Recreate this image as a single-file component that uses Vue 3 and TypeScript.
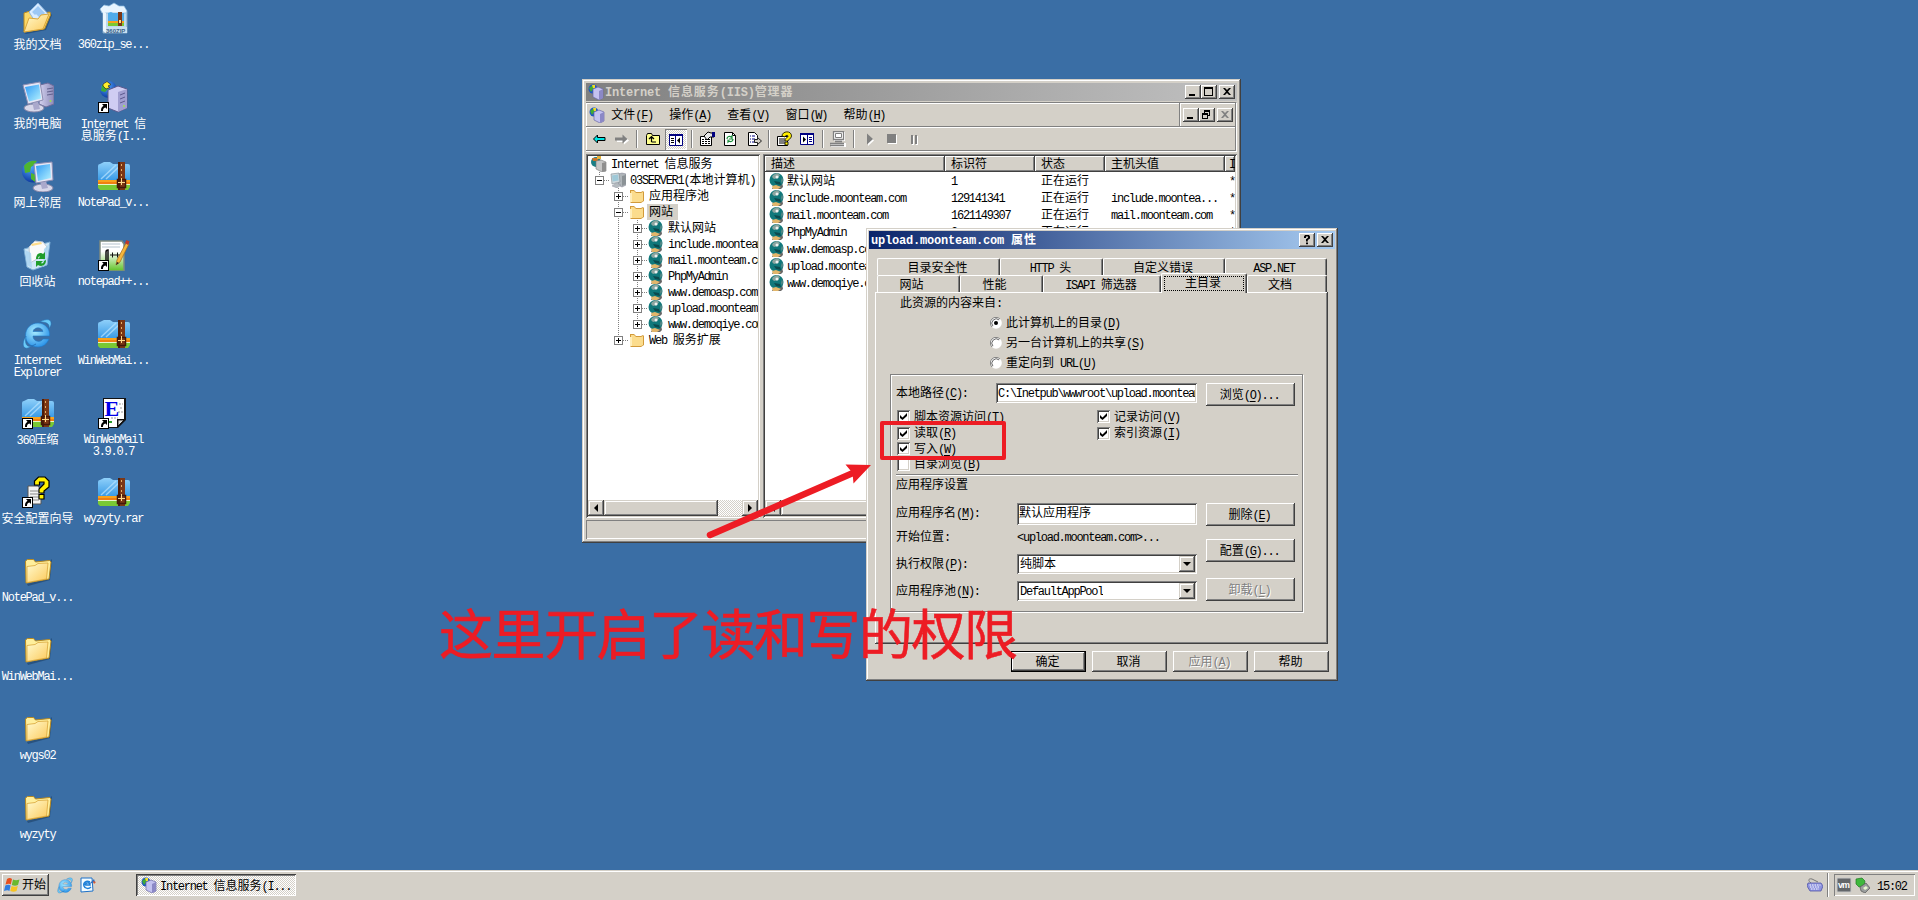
<script setup lang="ts">
import { h, type FunctionalComponent } from 'vue'

/* Splits a label into half-width and full-width runs; "&" marks the accelerator letter. */
const Tx: FunctionalComponent<{ t: string }> = (props) => {
  const runs = props.t.match(/&[\x21-\x7e]|[\x20-\x25\x27-\x7e]+|[^\x20-\x7e]+/g) ?? []
  return h(
    'span',
    { class: 'tx' },
    runs.map((r) => {
      if (r[0] === '&') return h('span', { class: 'en key' }, r.slice(1))
      return h('span', { class: /^[\x20-\x7e]/.test(r) ? 'en' : 'zh' }, r)
    }),
  )
}
Tx.props = ['t']

const Ico: FunctionalComponent<{ n: string; w?: number; hh?: number }> = (props) =>
  h('svg', { class: 'ico', width: props.w ?? 16, height: props.hh ?? props.w ?? 16 }, [
    h('use', { href: '#' + props.n }),
  ])
Ico.props = ['n', 'w', 'hh']

interface DeskItem { icon: string; lines: string[]; link?: boolean }
const columns: DeskItem[][] = [
  [
    { icon: 'd-docs', lines: ['我的文档'] },
    { icon: 'd-pc', lines: ['我的电脑'] },
    { icon: 'd-net', lines: ['网上邻居'] },
    { icon: 'd-bin', lines: ['回收站'] },
    { icon: 'd-ie', lines: ['Internet', 'Explorer'] },
    { icon: 'd-zip', lines: ['360压缩'], link: true },
    { icon: 'd-sec', lines: ['安全配置向导'], link: true },
    { icon: 'd-folder', lines: ['NotePad_v...'] },
    { icon: 'd-folder', lines: ['WinWebMai...'] },
    { icon: 'd-folder', lines: ['wygs02'] },
    { icon: 'd-folder', lines: ['wyzyty'] },
  ],
  [
    { icon: 'd-setup', lines: ['360zip_se...'] },
    { icon: 'd-iis', lines: ['Internet 信', '息服务(I...'], link: true },
    { icon: 'd-zip', lines: ['NotePad_v...'] },
    { icon: 'd-npp', lines: ['notepad++...'], link: true },
    { icon: 'd-zip', lines: ['WinWebMai...'] },
    { icon: 'd-mail', lines: ['WinWebMail', '3.9.0.7'], link: true },
    { icon: 'd-zip', lines: ['wyzyty.rar'] },
  ],
]

const menus = ['文件(&F)', '操作(&A)', '查看(&V)', '窗口(&W)', '帮助(&H)']

type Cell = 'line' | 'plus' | 'minus' | 'plusEnd' | 'minusEnd' | 'blank'
interface Node { cells: Cell[]; icon: string; text: string; sel?: boolean }
const tree: Node[] = [
  { cells: [], icon: 's-root', text: 'Internet 信息服务' },
  { cells: ['minusEnd'], icon: 's-server', text: '03SERVER1(本地计算机)' },
  { cells: ['blank', 'plus'], icon: 's-folder', text: '应用程序池' },
  { cells: ['blank', 'minus'], icon: 's-folder', text: '网站', sel: true },
  { cells: ['blank', 'line', 'plus'], icon: 's-site', text: '默认网站' },
  { cells: ['blank', 'line', 'plus'], icon: 's-site', text: 'include.moonteam.com' },
  { cells: ['blank', 'line', 'plus'], icon: 's-site', text: 'mail.moonteam.com' },
  { cells: ['blank', 'line', 'plus'], icon: 's-site', text: 'PhpMyAdmin' },
  { cells: ['blank', 'line', 'plus'], icon: 's-site', text: 'www.demoasp.com' },
  { cells: ['blank', 'line', 'plus'], icon: 's-site', text: 'upload.moonteam.com' },
  { cells: ['blank', 'line', 'plusEnd'], icon: 's-site', text: 'www.demoqiye.com' },
  { cells: ['blank', 'plusEnd'], icon: 's-folder', text: 'Web 服务扩展' },
]

const heads = ['描述', '标识符', '状态', '主机头值', 'IP']
const sites = [
  ['默认网站', '1', '正在运行', '', '*'],
  ['include.moonteam.com', '129141341', '正在运行', 'include.moontea...', '*'],
  ['mail.moonteam.com', '1621149307', '正在运行', 'mail.moonteam.com', '*'],
  ['PhpMyAdmin', '2', '正在运行', '', '*'],
  ['www.demoasp.com', '', '', '', ''],
  ['upload.moonteam.com', '', '', '', ''],
  ['www.demoqiye.com', '', '', '', ''],
]

const tabsBack = [
  { t: '目录安全性', c: 't1' }, { t: 'HTTP 头', c: 't2' }, { t: '自定义错误', c: 't3' }, { t: 'ASP.NET', c: 't4' },
]
const tabsFront = [
  { t: '网站', c: 'f1' }, { t: '性能', c: 'f2' }, { t: 'ISAPI 筛选器', c: 'f3' }, { t: '主目录', c: 'f4 on' }, { t: '文档', c: 'f5' },
]
const sources = [
  { t: '此计算机上的目录(&D)', on: true },
  { t: '另一台计算机上的共享(&S)', on: false },
  { t: '重定向到 URL(&U)', on: false },
]
const permsLeft = [
  { t: '脚本资源访问(&T)', on: true }, { t: '读取(&R)', on: true }, { t: '写入(&W)', on: true }, { t: '目录浏览(&B)', on: false },
]
const permsRight = [{ t: '记录访问(&V)', on: true }, { t: '索引资源(&I)', on: true }]
</script>

<template>
  <div class="screen">
    <svg class="defs" width="0" height="0">
      <defs>
        <linearGradient id="gFold" x1="0" y1="0" x2="1" y2="1"><stop offset="0" stop-color="#fffbd0" /><stop offset="1" stop-color="#fcc95a" /></linearGradient>
        <linearGradient id="gZip" x1="0" y1="0" x2="0" y2="1"><stop offset="0" stop-color="#8fd0fa" /><stop offset="1" stop-color="#3a9be6" /></linearGradient>
        <linearGradient id="gScr" x1="0" y1="0" x2="1" y2="1"><stop offset="0" stop-color="#2f9af5" /><stop offset="1" stop-color="#b5f3ff" /></linearGradient>
        <linearGradient id="gBox" x1="0" y1="0" x2="1" y2="0"><stop offset="0" stop-color="#d5d3f0" /><stop offset="1" stop-color="#8c8ab8" /></linearGradient>
        <radialGradient id="gE" cx=".4" cy=".35" r=".7"><stop offset="0" stop-color="#a8ecff" /><stop offset="1" stop-color="#2790e8" /></radialGradient>
        <radialGradient id="gGlobe" cx=".4" cy=".3" r=".75"><stop offset="0" stop-color="#4fa8ff" /><stop offset="1" stop-color="#0a329a" /></radialGradient>
        <linearGradient id="gGreen" x1="0" y1="0" x2="0" y2="1"><stop offset=".35" stop-color="#fff" /><stop offset="1" stop-color="#5fc226" /></linearGradient>
      </defs>

      <symbol id="d-folder" viewBox="1 -1 32 32">
        <path d="M6 28l22-6 2-19 1 1-2 20-22 6z" fill="#1d3f66" opacity=".6" />
        <path d="M4.500 5l2-1.500 6 0 2 2.500 14-1.500 1.500 1.500-2 17L5 27z" fill="#ffef9c" stroke="#b98a20" />
        <path d="M6 10.500l8-1 3-2 10-.5-1.500 16L6 26.500z" fill="url(#gFold)" stroke="#d9a63a" stroke-width=".8" />
      </symbol>
      <symbol id="d-docs" viewBox="1 0 32 32">
        <path d="M3 31l20-4 7-15 1 1-6 15-20 4z" fill="#1d3f66" opacity=".6" />
        <path d="M3 11l6-2 3 2h10l7-1 .5 3-6 14L3 30z" fill="#fbd867" stroke="#b98a20" />
        <path d="M8 10l9-9 11 12-11 11z" fill="#d9ecff" stroke="#8fb6e0" />
        <path d="M11 10l6-6 3 3-6 6zM20 7l4 4-5 5-4-4z" fill="#9cc8f5" />
        <path d="M3 30l5-14 9 1 3-4 8-1-6 15z" fill="url(#gFold)" stroke="#d9a63a" />
      </symbol>
      <symbol id="d-pc" viewBox="0 0 32 32">
        <path d="M18 4l8-2 6 3v18l-8 3-7-3z" fill="url(#gBox)" stroke="#6f6d9c" />
        <path d="M25 8l6-1M25 11l6-1M25 14l6-1" stroke="#62608c" />
        <circle cx="28.500" cy="20" r="1" fill="#9de34c" />
        <ellipse cx="12" cy="27" rx="10" ry="4" fill="#d8d8ea" stroke="#8888a8" />
        <path d="M10 20h6l2 8-6 1z" fill="#aaa9cc" />
        <path d="M1 4l17-3 3 18-15 4z" fill="#e5e6f5" stroke="#8e8eb2" />
        <path d="M3 6l14-2.500 2 14-12 3z" fill="url(#gScr)" />
      </symbol>
      <symbol id="d-net" viewBox="0 0 32 32">
        <circle cx="11" cy="11.500" r="11" fill="url(#gGlobe)" />
        <path d="M2 6c3-5 9-6 13-5l-3 4-3 2-1 5-5 1zM9 13l5 2-1 7-4-3z" fill="#4fb52f" />
        <ellipse cx="21" cy="28" rx="10" ry="4" fill="#d8d8ea" stroke="#8888a8" />
        <path d="M18 21h6l2 7-6 1z" fill="#aaa9cc" />
        <path d="M12 4l18-2 1 18-17 3z" fill="#e5e6f5" stroke="#8e8eb2" />
        <path d="M14 6l14-2 1 14-13 3z" fill="url(#gScr)" />
      </symbol>
      <symbol id="d-bin" viewBox="0 0 32 32">
        <path d="M2 10l26-7-3 23-14 5-6-3z" fill="#cfe7f7" stroke="#7fb0d6" />
        <path d="M7 8l6-6 8 1 4 5-3 8-14 8z" fill="#fafafa" stroke="#bfc9d4" />
        <path d="M9 5l10-2 1 2-10 2z" fill="#ffdc8a" />
        <path d="M3 11l6 3 1 15-5-3zM22 10l5-5-3 21-3 2z" fill="#a7d3f0" opacity=".8" />
        <path d="M14 20c0-6 5-7 7-5l2-2v7h-7l2-2c-1-1-2 0-2 2zM24 21c0 6-5 7-8 5l-2 2v-6h7l-2 2c1 1 3 0 3-2z" fill="#1f9c2b" />
      </symbol>
      <symbol id="d-ie" viewBox="0 0 32 32">
        <path d="M27.500 18H11c0 6 8 7 10 3h6c-2 5-6 8-11 8C8 29 3.500 24 3.500 17.500 3.500 10 9 5 16 5s12.500 6 11.500 13zM11 13.500h10c-1-5-9-5-10 0z" fill="url(#gE)" fill-rule="evenodd" stroke="#1e78c8" stroke-width=".6" />
        <path d="M18 4c7-4 12-3 11 3l-2 4c1-6-3-7-9-7zM4 18C-1 26 1 33 8 29l6-3c-8 5-12 2-10-8z" fill="#6bcbf8" stroke="#1e68b0" stroke-width=".5" />
      </symbol>
      <symbol id="d-zip" viewBox="0 0 32 32">
        <path d="M0 6q0-2 2-2l4-2h6l3 2h15q2 0 2 2v14H0z" fill="url(#gZip)" />
        <path d="M3 19L18 5M8 19L23 5" stroke="#b9e4ff" stroke-width="1.500" opacity=".7" />
        <path d="M0 20h32v4H0z" fill="#f9a21b" /><path d="M0 22h32v2H0z" fill="#f07f12" />
        <path d="M0 24h32v3l-2 3H2l-2-2z" fill="#79c934" /><path d="M0 24h32v1H0z" fill="#e8f5c8" />
        <path d="M20 2h7v28h-7z" fill="#7c3715" /><path d="M20 2h2v28h-2z" fill="#4e1d08" />
        <path d="M23 4h1v2h-1zM23 9h1v2h-1zM23 14h1v2h-1z" fill="#e4b068" />
        <path d="M19.500 19.500h8v8h-8z" fill="none" stroke="#42180a" stroke-width="1.500" /><path d="M23 18h1v7h-1zM20 22h7v1h-7z" fill="#ffd98a" />
      </symbol>
      <symbol id="d-setup" viewBox="0 0 32 32">
        <path d="M5 8h23l1 2v21H5z" fill="#bcd8ee" stroke="#7fa4c4" />
        <path d="M2 7l4-4 5 1 5-3 5 3 5 0 3 5-1 2H4z" fill="#e9f5ff" stroke="#88b7dd" stroke-width=".7" />
        <path d="M10 11l3-1 2 1h11v13H10z" fill="#4fabea" /><path d="M10 19h16v2H10z" fill="#f9a21b" /><path d="M10 21h16v3H10z" fill="#79c934" />
        <path d="M20 10h4v14h-4z" fill="#7c3715" /><path d="M21 18h2v3h-2z" fill="#ffd98a" />
        <path d="M5 9l3 2v20l-3-2z" fill="#eaf5fd" /><path d="M8 25h21v6H8z" fill="#c9dff0" />
        <text x="8" y="30.500" font-family="Liberation Sans" font-size="6" font-weight="700" fill="#3a5f85">360ZIP</text>
      </symbol>
      <symbol id="d-iis" viewBox="0 0 32 32">
        <circle cx="10.500" cy="8.500" r="8.500" fill="url(#gGlobe)" />
        <path d="M4 4l5-1 2 4-4 4-4-1zM9 12l4 2-2 4z" fill="#3faa35" />
        <path d="M5 3l4-2.500 4 3-3 1.500 2 1.500-4 1.500-3-3z" fill="#ffee2c" stroke="#333" stroke-width=".8" />
        <path d="M10 9l10-4 9 3v19l-9 4-10-4z" fill="#cfcdf2" stroke="#5d5a8e" />
        <path d="M20 11l9-3v19l-9 4z" fill="#a19fd0" /><path d="M22 14l5-2M22 18l5-2M22 22l5-2" stroke="#5d5a8e" />
        <circle cx="26" cy="25" r="1" fill="#9de34c" />
      </symbol>
      <symbol id="d-npp" viewBox="0 0 32 32">
        <path d="M2 2h22l2 3v27H2z" fill="url(#gGreen)" stroke="#7f8a80" stroke-width="1.500" />
        <path d="M4 5h18M4 8h18" stroke="#b4c2cd" />
        <path d="M8 22v-9q0-2 2-2v11" fill="none" stroke="#111" stroke-width="1.500" />
        <path d="M12 16h5M14.500 13.500v5M17 16h5M19.500 13.500v5" stroke="#111" />
        <path d="M18 26l1-5L28 4l3 1-9 18z" fill="#f5b63c" stroke="#a1651b" stroke-width=".7" /><path d="M27 4l1.500-3 3 1.500L30 6z" fill="#c0392b" />
        <path d="M18 26l1-3 2 1z" fill="#222" />
      </symbol>
      <symbol id="d-mail" viewBox="0 0 32 32">
        <path d="M5 1h23v22l-8 8H5z" fill="#111" /><path d="M6 2h20v20h-7v8H6z" fill="#fff" />
        <path d="M20 29v-6h6z" fill="#ddd" stroke="#000" stroke-width=".8" />
        <path d="M21 7h4M22 11h3M20 15h5M13 21h7" stroke="#999" stroke-dasharray="2 1" />
        <text x="6.500" y="19" font-family="Liberation Serif" font-size="22" font-weight="700" fill="#0000e8">E</text>
        <path d="M10 24h4v2h-4z" fill="#2a9a2a" />
      </symbol>
      <symbol id="d-sec" viewBox="0 0 32 32">
        <path d="M6 10h10l3 4v14H6z" fill="#f2f2f2" stroke="#555" /><path d="M8 15h9M8 18h9M8 21h9M8 24h9" stroke="#888" />
        <path d="M12.500 9V5l4-4h6.500l4 4v6l-5 4v2h-5v-4l5-5V6h-4.500v3zM17 18.500h5V23h-5z" fill="#fff200" stroke="#000" stroke-width="1.200" />
      </symbol>
      <symbol id="link" viewBox="0 0 11 11">
        <path d="M0 0h11v11H0z" fill="#000" /><path d="M1 1h9v9H1z" fill="#fff" /><path d="M4 2h5v5L7.500 5.500C5 6 5 7.500 5 9H3C3 7 3 5.500 5.500 3.700z" fill="#000" />
      </symbol>

      <symbol id="s-iis" viewBox="0 0 16 16">
        <circle cx="5" cy="5" r="4.500" fill="#1d56c4" /><path d="M1 4l4-3 1 3-3 4z" fill="#3faa35" /><path d="M4 1l3 0 0 3-2 0z" fill="#f3dc26" />
        <path d="M5 5l5-2 5 2v9l-4 2-6-3z" fill="#c3c2f0" stroke="#6a68a6" stroke-width=".7" /><path d="M11 7l4-2v9l-4 2z" fill="#8b88c6" />
      </symbol>
      <symbol id="s-root" viewBox="0 0 16 16">
        <circle cx="5" cy="6" r="5" fill="#1b7f86" /><path d="M1 2h6v3H2z" fill="#c8742a" /><path d="M6 0h4v3H6z" fill="#e6b23a" />
        <path d="M5 5l5-1 5 2v9l-4 1-6-3z" fill="#c6c6c6" stroke="#777" stroke-width=".6" /><path d="M11 7l4-1v9l-4 1z" fill="#8f8f8f" />
      </symbol>
      <symbol id="s-server" viewBox="0 0 16 16">
        <path d="M8 2l4-1 4 1v11l-4 2-4-2z" fill="#b0b6ba" stroke="#778" stroke-width=".5" /><path d="M12 4l4-1v9l-4 2z" fill="#8b9296" />
        <path d="M1 2l8-1 1 9-8 2z" fill="#cfd8dc" stroke="#7d8a90" stroke-width=".6" /><path d="M2 3.500l6-1 .7 6-6 1z" fill="#9fc9d8" /><path d="M2 14l4-3 5 2-4 3z" fill="#b5bcc0" stroke="#889" stroke-width=".4" />
      </symbol>
      <symbol id="s-folder" viewBox="0 0 16 16">
        <path d="M1 2h4l2 2h5l2-1 1 1v9l-3 2H2l-1-1z" fill="#d29a3a" /><path d="M2 3h3l2 2h5l2-1v9l-2 1H2z" fill="#fbdc8d" /><path d="M1 5l2 0v9H1z" fill="#ffeebc" />
      </symbol>
      <symbol id="s-site" viewBox="0 0 16 16">
        <path d="M5 12l8-3 1 5-2 2H3z" fill="#666" /><circle cx="7.500" cy="7" r="7" fill="#10787b" />
        <path d="M4 2l4-2 3 2-2 3-4 1-2-2z" fill="#8ba5a0" /><path d="M5 8l6 1 1 3-5-1z" fill="#0b4a4e" /><circle cx="8" cy="4" r="1.500" fill="#eef2f2" />
        <path d="M13 4l1 3-1 4-1-3z" fill="#5e8886" /><path d="M3 13l4-1 5 2-3 2H4z" fill="#e2b66b" />
      </symbol>

      <symbol id="b-back" viewBox="0 0 16 16"><path d="M2.500 8L6.500 4v2.500H14v3H6.500V12z" fill="#00e5e5" stroke="#000" /></symbol>
      <symbol id="b-fwd" viewBox="0 0 16 16"><path d="M3 8h7V5l5 4.500-5 4V11H3z" fill="#fff" /><path d="M1 6.500h7.500V3.500L13.500 8l-5 4.500V9.500H1z" fill="#808080" /></symbol>
      <symbol id="b-up" viewBox="0 0 16 16"><path d="M1.500 13.500v-9l1-2h4l1 2h7v9z" fill="#ffff8c" stroke="#000" /><path d="M6.500 11V6M4 8l2.500-2.500L9 8M6.500 11H11" fill="none" stroke="#000" stroke-width="1.200" /></symbol>
      <symbol id="b-tree" viewBox="0 0 16 16"><path d="M1.500 2.500h13v11h-13z" fill="#fff" stroke="#000080" /><path d="M1 2h14v2H1zM7 4h1v10H7z" fill="#000080" /><path d="M3 6.500h3M3 8.500h3M3 10.500h3" stroke="#000" /><path d="M12 5.500v6l-3-3z" fill="#000" /></symbol>
      <symbol id="b-props" viewBox="0 0 16 16"><path d="M1.500 5.500h11v9h-11z" fill="#fff" stroke="#000" /><path d="M3 8.500h8M3 10.500h8M3 12.500h8" stroke="#000" stroke-dasharray="2 1" /><path d="M5 5l4-4 3 1 3 0v4h-4L8 9z" fill="#e8e8e8" stroke="#000" /><path d="M13 1h3v5h-3z" fill="#000080" /></symbol>
      <symbol id="b-refresh" viewBox="0 0 16 16"><path d="M2.500 1.500h8l3 3v10h-11z" fill="#fff" stroke="#000" /><path d="M10.500 1.500v3h3" fill="none" stroke="#000" /><path d="M5 8c0-3 3-3 4-2l1-1v3H7M11 8c0 3-3 3-4 2l-1 1V8.500" fill="none" stroke="#1c8f3c" stroke-width="1.200" /></symbol>
      <symbol id="b-export" viewBox="0 0 16 16"><path d="M2.500 1.500h6l3 3v10h-9z" fill="#fff" stroke="#000" /><path d="M4 5h1M6 5h3M4 8h1M6 8h3M4 11h1M6 11h3" stroke="#000080" /><path d="M8.500 8.500h3v-2l4 3.500-4 3.500v-2h-3z" fill="#d4d0c8" stroke="#222" /></symbol>
      <symbol id="b-help" viewBox="0 0 16 16"><path d="M1.500 5.500h10v9h-10z" fill="#fff" stroke="#000" /><path d="M3 8h6M3 10h6M3 12h6" stroke="#000" /><path d="M6 5c0-5 9.500-6 9.500 0 0 3-3.500 3-3.500 5H9c0-4 3-3 3-5 0-1-3-1-3 1zM9 11h3v3H9z" fill="#ffee00" stroke="#000" stroke-width=".8" /></symbol>
      <symbol id="b-pane" viewBox="0 0 16 16"><path d="M1.500 2.500h13v11h-13z" fill="#fff" stroke="#000080" /><path d="M1 2h14v2H1zM8 4h1v10H8z" fill="#000080" /><path d="M10 6.500h3M10 8.500h3M10 10.500h3" stroke="#000080" /><path d="M4 5.500v6l3-3z" fill="#000" /></symbol>
      <symbol id="b-pc" viewBox="0 0 16 16"><path d="M4 1h11v9H4zM1 12h15v4H1z" fill="#fff" /><path d="M3.500 .5h10v8h-10zM5 10.500h7M0 12.500h14M0 14.500h14" fill="none" stroke="#808080" stroke-width="1.300" /><path d="M5.500 2.500h6v4h-6z" fill="none" stroke="#808080" /></symbol>
      <symbol id="b-play" viewBox="0 0 16 16"><path d="M7 4v11l6-5.500z" fill="#fff" /><path d="M6 2.500v11L12 8z" fill="#808080" /></symbol>
      <symbol id="b-stop" viewBox="0 0 16 16"><path d="M4 4h9v9H4z" fill="#fff" /><path d="M3 3h9v9H3z" fill="#808080" /></symbol>
      <symbol id="b-pause" viewBox="0 0 16 16"><path d="M5 5h2v9H5zM9 5h2v9H9z" fill="#fff" /><path d="M4 4h2v9H4zM8 4h2v9H8z" fill="#808080" /></symbol>

      <symbol id="w-min" viewBox="0 0 16 14"><path d="M4 9h6v2H4z" /></symbol>
      <symbol id="w-max" viewBox="0 0 16 14"><path d="M3 2h9v9H3zM4 4v6h7V4z" fill-rule="evenodd" /></symbol>
      <symbol id="w-restore" viewBox="0 0 16 14"><path d="M5 2h6v6H9v3H3V5h2zM6 4v1h3v2h1V4zM4 7v3h4V7z" fill-rule="evenodd" /></symbol>
      <symbol id="w-close" viewBox="0 0 16 14"><path d="M4 3h2l2 2 2-2h2L9 6.500l3 3.500h-2L8 8l-2 2H4l3-3.500z" fill="currentColor" /></symbol>
      <symbol id="w-q" viewBox="0 0 16 14"><path d="M5 3.500L6 2h4l1 1.500v2L8.800 7v1.500H7V6.300l2-1.500V3.500H7V5H5zM7 9.500h2v1.800H7z" /></symbol>
      <symbol id="tick" viewBox="0 0 13 13"><path d="M3 5l2.500 2.500L10 3v3L5.500 10 3 8z" /></symbol>
      <symbol id="radio" viewBox="0 0 12 12"><circle cx="6" cy="6" r="5.800" fill="#fff" /><path d="M2 10A5.500 5.500 0 0 1 10 2" fill="none" stroke="#808080" /><path d="M2.900 9.100A4.400 4.400 0 0 1 9.100 2.900" fill="none" stroke="#404040" stroke-width=".8" /></symbol>

      <symbol id="flag" viewBox="0 0 16 16">
        <path d="M3 2c2-1.500 4-1 5 0L6.800 7.500C6 6.500 4 6.500 1.500 7.500z" fill="#e8501e" /><path d="M9 2.500c2 1 4 1 6.500 0L14 8c-2 1-4 1-6.200 0z" fill="#6ab82e" />
        <path d="M1.300 8.500c2-1 4-1 5.300 0L5.400 14c-1-1-3-1-5.400 0z" fill="#2f7de0" /><path d="M7.600 9c2 1 4 1 6.200 0l-1.300 5c-2 1-4 1-6.200 0z" fill="#f7c421" />
      </symbol>
      <symbol id="oe" viewBox="0 0 16 16"><path d="M1 1h11l1 13-12 1z" fill="#f2fbff" stroke="#1d70c8" /><path d="M10 5C6 3 3 6 4 9s5 3 7 1M5 8h5c0-3-4-3-5 0" fill="none" stroke="#1d7fd8" stroke-width="1.500" /><path d="M9 7l5-5 1 3z" fill="#2b6fc0" /><path d="M13 4l3 1-2 2z" fill="#e0552a" /></symbol>
      <symbol id="kbd" viewBox="0 0 16 16"><path d="M4 6C1 4 1 1 5 2l6 3" fill="none" stroke="#777" /><path d="M1 6h13l2 3-2 5H3L0 9z" fill="#8f94e0" stroke="#5357a8" stroke-width=".8" /><path d="M2.500 8h11M3 10h10M4 12h8" stroke="#fff" stroke-dasharray="1.500 1" /></symbol>
      <symbol id="vm" viewBox="0 0 16 16"><path d="M1 1h14v14H1z" fill="#63666a" stroke="#c8c8c8" /><text x="2" y="11" font-family="Liberation Sans" font-size="9" font-weight="700" letter-spacing="-1" fill="#fff">vm</text></symbol>
      <symbol id="plug" viewBox="0 0 16 16"><path d="M2 2l6-1 3 3-1 5-5 1-3-3z" fill="#3fb83c" stroke="#1f7a24" stroke-width=".7" /><path d="M6 10l6-4 4 5-5 5-4-2z" fill="#9a9d9d" stroke="#555" stroke-width=".7" /><path d="M9 11l3-2 2 2-3 2z" fill="#e8f6d0" /></symbol>
    </svg>

    <div class="desktop">
      <div v-for="(col, c) in columns" :key="c" class="col">
        <div v-for="(d, i) in col" :key="i" class="item">
          <div class="pic">
            <Ico :n="d.icon" :w="32" />
            <Ico v-if="d.link" class="badge" n="link" :w="11" />
          </div>
          <Tx v-for="l in d.lines" :key="l" :t="l" />
        </div>
      </div>
    </div>

    <!-- IIS manager -->
    <section class="win iis">
      <header class="title gray">
        <Ico n="s-iis" /><Tx class="cap" t="Internet 信息服务(IIS)管理器" />
        <div class="btns"><i class="wb"><Ico n="w-min" :w="16" :hh="14" /></i><i class="wb"><Ico n="w-max" :w="16" :hh="14" /></i><i class="wb gap"><Ico n="w-close" :w="16" :hh="14" /></i></div>
      </header>
      <div class="rebar">
        <div class="menurow">
          <div class="band menu"><Ico n="s-iis" /><Tx v-for="m in menus" :key="m" :t="m" /></div>
          <div class="band mdi"><i class="wb"><Ico n="w-min" :w="16" :hh="14" /></i><i class="wb"><Ico n="w-restore" :w="16" :hh="14" /></i><i class="wb gap off"><Ico n="w-close" :w="16" :hh="14" /></i></div>
        </div>
        <div class="band tools">
          <Ico n="b-back" /><Ico class="m7" n="b-fwd" /><b class="sep s3" />
          <Ico class="m7" n="b-up" /><span class="press"><Ico n="b-tree" /></span><b class="sep s2" />
          <Ico class="m6" n="b-props" /><Ico class="m7" n="b-refresh" /><Ico class="m8" n="b-export" /><b class="sep s3" />
          <Ico class="m6" n="b-help" /><Ico class="m7" n="b-pane" /><b class="sep s4" />
          <Ico class="m6" n="b-pc" /><b class="sep s4" />
          <Ico class="m6" n="b-play" /><Ico class="m7" n="b-stop" /><Ico class="m7" n="b-pause" />
        </div>
      </div>
      <div class="body">
        <div class="pane tree">
          <div class="rows">
            <div v-for="(n, i) in tree" :key="i" class="node">
              <svg v-for="(k, j) in n.cells" :key="j" class="cell" width="19" height="16">
                <g v-if="k !== 'blank'" stroke="#808080" stroke-dasharray="1 1">
                  <path :d="k.endsWith('End') ? 'M9.500 0V8' : 'M9.500 0V16'" />
                  <path v-if="k !== 'line'" d="M10 8.500H19" />
                </g>
                <g v-if="k !== 'blank' && k !== 'line'">
                  <rect x="5.500" y="4.500" width="8" height="8" fill="#fff" stroke="#808080" />
                  <path d="M7 8.500H12" stroke="#000" />
                  <path v-if="k.startsWith('plus')" d="M9.500 6V11" stroke="#000" />
                </g>
              </svg>
              <Ico :n="n.icon" /><Tx :class="{ sel: n.sel }" :t="n.text" />
            </div>
          </div>
          <div class="hbar"><i class="sb"><b class="al" /></i><i class="thumb" /><i class="track" /><i class="sb"><b class="ar" /></i></div>
        </div>
        <div class="pane list">
          <div class="grid head"><div v-for="t in heads" :key="t"><Tx :t="t" /></div></div>
          <div class="lrows">
            <div v-for="(r, i) in sites" :key="i" class="grid lrow">
              <div v-for="(v, j) in r" :key="j"><Ico v-if="j === 0" n="s-site" /><Tx :t="v" /></div>
            </div>
          </div>
          <div class="hbar"><i class="sb"><b class="al" /></i><i class="thumb wide" /><i class="track" /><i class="sb"><b class="ar" /></i></div>
        </div>
      </div>
      <footer class="status" />
    </section>

    <!-- Site properties -->
    <section class="win dlg">
      <header class="title blue">
        <Tx class="cap" t="upload.moonteam.com 属性" />
        <div class="btns"><i class="wb"><Ico n="w-q" :w="16" :hh="14" /></i><i class="wb gap"><Ico n="w-close" :w="16" :hh="14" /></i></div>
      </header>
      <div class="tabs back"><div v-for="t in tabsBack" :key="t.t" class="tab" :class="t.c"><Tx :t="t.t" /></div></div>
      <div class="tabs front"><div v-for="t in tabsFront" :key="t.t" class="tab" :class="t.c"><Tx :t="t.t" /></div></div>
      <div class="page">
        <div class="from"><Tx t="此资源的内容来自:" /></div>
        <div class="radios">
          <label v-for="s in sources" :key="s.t"><i class="rd"><Ico n="radio" :w="12" /><b v-if="s.on" /></i><Tx :t="s.t" /></label>
        </div>
        <div class="group">
          <div class="path">
            <Tx t="本地路径(&C):" /><div class="field"><Tx t="C:\Inetpub\wwwroot\upload.moonteam" /></div><div class="btn"><Tx t="浏览(&O)..." /></div>
          </div>
          <div class="perms">
            <div class="pl"><label v-for="p in permsLeft" :key="p.t"><i class="ck"><Ico v-if="p.on" n="tick" :w="13" /></i><Tx :t="p.t" /></label></div>
            <div class="pr"><label v-for="p in permsRight" :key="p.t"><i class="ck"><Ico v-if="p.on" n="tick" :w="13" /></i><Tx :t="p.t" /></label></div>
          </div>
          <div class="rule" />
          <div class="sub"><Tx t="应用程序设置" /></div>
          <div class="app">
            <div class="form">
              <div class="fr r1"><Tx t="应用程序名(&M):" /><div class="field"><Tx t="默认应用程序" /></div></div>
              <div class="fr r2"><Tx t="开始位置:" /><Tx t="<upload.moonteam.com>..." /></div>
              <div class="fr r3"><Tx t="执行权限(&P):" /><div class="field"><Tx t="纯脚本" /><i class="dd"><b /></i></div></div>
              <div class="fr r4"><Tx t="应用程序池(&N):" /><div class="field"><Tx t="DefaultAppPool" /><i class="dd"><b /></i></div></div>
            </div>
            <div class="side">
              <div class="btn"><Tx t="删除(&E)" /></div><div class="btn"><Tx t="配置(&G)..." /></div><div class="btn off"><Tx t="卸载(&L)" /></div>
            </div>
          </div>
        </div>
      </div>
      <div class="actions">
        <div class="btn ok"><Tx t="确定" /></div><div class="btn"><Tx t="取消" /></div><div class="btn off"><Tx t="应用(&A)" /></div><div class="btn"><Tx t="帮助" /></div>
      </div>
    </section>

    <!-- Annotations -->
    <div class="mark" />
    <svg class="arrow" width="180" height="90">
      <path d="M10 75L153 13" stroke="#ed1c24" stroke-width="6.500" stroke-linecap="round" />
      <path d="M171 5L145.500 4.500 152.500 13 153.500 23.500z" fill="#ed1c24" />
    </svg>
    <div class="note">这里开启了读和写的权限</div>

    <footer class="bar">
      <div class="start"><Ico n="flag" /><Tx t="开始" /></div>
      <Ico class="ql" n="d-ie" :w="17" /><Ico class="q2" n="oe" />
      <div class="task"><Ico n="s-iis" /><Tx t="Internet 信息服务(I..." /></div>
      <Ico class="kb" n="kbd" /><b class="tsep" />
      <div class="tray"><Ico n="vm" /><Ico n="plug" /><Tx t="15:02" /></div>
    </footer>
  </div>
</template>

<style>
body { overflow: hidden; }
.tx { white-space: pre; font-family: "Noto Sans CJK SC", sans-serif; font-size: 12px; line-height: 14px; display: block; flex: none; }
.tx .en { font-family: "Liberation Mono", monospace; font-size: 12px; letter-spacing: -1.26px; line-height: 1; vertical-align: 1px; }
.tx .zh { line-height: 1; vertical-align: 1px; }
.tx .key { text-decoration: underline; text-underline-offset: 2px; text-decoration-thickness: 1px; }
.tx.cap { font-weight: 700; }
.tx.cap .en { letter-spacing: -.2px; }
.tx.cap .zh { letter-spacing: .9px; }
.ico { display: block; flex: none; }
</style>

<style scoped>
.screen { position: relative; width: 1918px; height: 900px; overflow: hidden; background: #3a6ea5; color: #000; display: flex; flex-direction: column; }
.screen * { box-sizing: border-box; }
.defs { position: absolute; }
i, b { font-style: normal; display: block; }

.desktop { flex: 1; display: flex; padding-top: 2px; min-height: 0; }
.col { width: 75px; margin-right: 1px; }
.item { height: 79px; display: flex; flex-direction: column; align-items: center; color: #fff; }
.item .tx { line-height: 12px; height: 12px; }
.pic { position: relative; margin-bottom: 4px; }
.badge { position: absolute; left: 0; bottom: 0; }

.win { position: absolute; background: #d4d0c8; box-shadow: inset -1px -1px #404040, inset 1px 1px #d4d0c8, inset -2px -2px #808080, inset 2px 2px #fff; display: flex; flex-direction: column; }
.title { display: flex; align-items: center; height: 18px; flex: none; }
.gray { background: linear-gradient(90deg, #808080, #c0c0c0); color: #d4d0c8; padding-left: 2px; }
.gray .tx { margin-left: 1px; }
.blue { background: linear-gradient(90deg, #0a246a, #a6caf0); color: #fff; padding-left: 2px; }
.btns { margin-left: auto; display: flex; padding-right: 2px; color: #000; }
.wb { width: 16px; height: 14px; background: #d4d0c8; box-shadow: inset -1px -1px #404040, inset 1px 1px #fff, inset -2px -2px #808080; }
.gap { margin-left: 2px; }
.off { color: #808080; }
.btn.off { text-shadow: 1px 1px #fff; }

.iis { left: 582px; top: 79px; width: 659px; height: 464px; padding: 4px; }
.rebar { height: 50px; margin-top: 1px; border-top: 1px solid #808080; border-bottom: 1px solid #fff; border-right: 1px solid #fff; flex: none; }
.menurow { display: flex; height: 24px; }
.band { box-shadow: inset -1px -1px #808080, inset 1px 1px #fff; display: flex; align-items: center; }
.menu { flex: 1; padding-left: 3px; gap: 16.200px; }
.menu .ico + .tx { margin-left: -10px; }
.mdi { width: 56px; padding-left: 3px; }
.tools { height: 24px; padding-left: 5px; }
.sep { width: 2px; height: 18px; border-left: 1px solid #808080; border-right: 1px solid #fff; margin-left: 7px; }
.m6 { margin-left: 6px; }
.m7 { margin-left: 7px; }
.m8 { margin-left: 8px; }
.press { width: 22px; height: 21px; margin-left: 4px; padding: 3px 0 0 3px; background: repeating-conic-gradient(#fff 0 25%, #d4d0c8 0 50%) 0 0 / 2px 2px; box-shadow: inset 1px 1px #808080, inset -1px -1px #fff; }
.s2 { margin-left: 4px; }
.s3 { margin-left: 6px; }
.s4 { margin-left: 7px; }
.body { display: flex; height: 364px; margin-top: 2px; gap: 3px; }
.pane { background: #fff; position: relative; display: flex; flex-direction: column; padding: 2px; overflow: hidden; }
.pane::after { content: ""; position: absolute; inset: 0; box-shadow: inset 1px 1px #808080, inset -1px -1px #fff, inset 2px 2px #404040, inset -2px -2px #d4d0c8; }
.tree { width: 174px; }
.rows { flex: 1; overflow: hidden; padding-left: 2px; }
.node { display: flex; height: 16px; align-items: center; }
.node .ico { margin: 0 4px 0 1px; }
.node .tx { height: 16px; line-height: 16px; }
.node .tx.sel { background: #d4d0c8; padding: 0 5px 0 2px; margin-left: -2px; }
.cell { flex: none; display: block; }
.hbar { display: flex; height: 16px; flex: none; }
.sb { width: 16px; flex: none; display: grid; place-items: center; }
.sb, .thumb, .dd { background: #d4d0c8; box-shadow: inset -1px -1px #404040, inset 1px 1px #d4d0c8, inset -2px -2px #808080, inset 2px 2px #fff; }
.thumb { width: 114px; }
.thumb.wide { width: 390px; }
.track { flex: 1; background: repeating-conic-gradient(#fff 0 25%, #d4d0c8 0 50%) 0 0 / 2px 2px; }
.al { border: 4px solid transparent; border-right-color: #000; border-left: 0; }
.ar { border: 4px solid transparent; border-left-color: #000; border-right: 0; }
.list { flex: 1; }
.grid { display: grid; grid-template-columns: 180px 90px 70px 120px 10px; }
.head { height: 16px; }
.head > div { background: #d4d0c8; padding: 1px 0 0 6px; overflow: hidden; box-shadow: inset -1px -1px #404040, inset 1px 1px #fff, inset -2px -2px #808080; }
.lrows { flex: 1; overflow: hidden; }
.lrow { height: 17px; }
.lrow > div { display: flex; align-items: center; padding-left: 6px; overflow: hidden; }
.lrow > div:first-child { padding-left: 4px; }
.grid > div:last-child { padding-left: 4px; }
.lrow .ico { margin-right: 2px; }
.status { height: 19px; margin-top: 2px; box-shadow: inset 1px 1px #808080, inset -1px -1px #fff; }

.dlg { left: 866px; top: 228px; width: 472px; height: 453px; padding: 3px; }
.tabs { display: flex; height: 17px; margin-left: 8px; flex: none; }
.back { margin-top: 9px; }
.tab { height: 17px; border: 1px solid #fff; border-bottom: 0; border-right: 1px solid #404040; border-radius: 2px 2px 0 0; box-shadow: inset -1px 0 #808080; background: #d4d0c8; display: flex; justify-content: center; align-items: center; padding: 2px 2px 0 0; }
.t1 { width: 123px; }
.t2 { width: 103px; }
.t3 { width: 122px; }
.t4 { width: 102px; padding-right: 4px; }
.f1 { width: 83px; padding-right: 14px; }
.f2 { width: 83px; padding-right: 14px; }
.f3 { width: 118px; }
.f4 { width: 86px; }
.f5 { width: 80px; padding-right: 14px; }
.tab.on { position: relative; margin-top: -2px; height: 20px; padding: 2px; align-items: stretch; }
.on .tx { flex: 1; outline: 1px dotted #000; outline-offset: -1px; text-align: center; line-height: 14px; padding-right: 2px; }
.page { margin-left: 6px; width: 453px; height: 352px; box-shadow: inset -1px -1px #404040, inset 1px 1px #fff, inset -2px -2px #808080; flex: none; }
.from { height: 20px; padding: 4px 0 0 25px; }
.radios { margin: 1px 0 2px 115px; }
.radios label { display: flex; align-items: center; height: 20px; }
.radios label:last-child { height: 19px; }
.rd { position: relative; margin-right: 4px; }
.rd b { position: absolute; left: 4px; top: 4px; width: 4px; height: 4px; border-radius: 2px; background: #000; }
.group { margin-left: 15px; width: 413px; height: 238px; border: 1px solid #808080; box-shadow: 1px 1px #fff, inset 1px 1px #fff; padding: 8px 0 0 5px; }
.path { display: flex; align-items: flex-start; height: 25px; }
.path > .tx { width: 100px; margin-top: 3px; }
.path .field { width: 201px; height: 20px; margin-right: 9px; padding-top: 3px; }
.field { background: #fff; box-shadow: inset 1px 1px #808080, inset -1px -1px #fff, inset 2px 2px #404040, inset -2px -2px #d4d0c8; padding: 2px; overflow: hidden; display: flex; }
.field .tx { flex: 0 1 auto; overflow: hidden; }
.btn { background: #d4d0c8; box-shadow: inset -1px -1px #404040, inset 1px 1px #fff, inset -2px -2px #808080; display: flex; align-items: center; justify-content: center; width: 89px; height: 23px; padding-right: 2px; }
.perms { display: flex; height: 66px; padding-left: 1px; }
.pl { width: 200px; }
.perms label { display: flex; align-items: center; height: 16px; }
.perms label:first-child { height: 17px; }
.pl label:nth-child(3) { height: 15px; }
.ck { width: 13px; height: 13px; margin-right: 4px; background: #fff; box-shadow: inset 1px 1px #808080, inset -1px -1px #fff, inset 2px 2px #404040, inset -2px -2px #d4d0c8; }
.rule { width: 402px; height: 2px; border-top: 1px solid #808080; border-bottom: 1px solid #fff; }
.sub { height: 18px; padding: 2px 0 0 0; }
.app { display: flex; padding-top: 9px; }
.form { width: 310px; }
.fr { display: flex; align-items: center; height: 20px; }
.fr > .tx:first-child { width: 121px; }
.fr .field { width: 180px; height: 20px; position: relative; }
.fr.r1 { height: 22px; align-items: flex-start; }
.r1 > .tx { margin-top: 3px; }
.fr.r1 .field { height: 22px; padding-top: 3px; }
.fr.r2 { height: 24px; margin-bottom: 5px; }
.r3 { margin-bottom: 7px; }
.r3 .field .tx, .r4 .field .tx { margin: 1px 0 0 1px; }
.dd { width: 16px; height: 16px; margin-left: auto; display: grid; place-items: center; flex: none; }
.dd b { border: 4px solid transparent; border-top-color: #000; border-bottom: 0; }
.side .btn:nth-child(2) { margin: 13px 0 16px; }
.actions { display: flex; justify-content: flex-end; gap: 6px; margin: 7px 6px 0 0; }
.actions .btn { width: 75px; height: 21px; }
.actions .ok { box-shadow: inset 0 0 0 1px #000, inset -2px -2px #404040, inset 2px 2px #fff, inset -3px -3px #808080; }

.mark { position: absolute; left: 880px; top: 421px; width: 126px; height: 39px; border: 4px solid #ed1c24; border-radius: 2px; }
.arrow { position: absolute; left: 700px; top: 460px; }
.note { position: absolute; left: 439px; top: 593px; font: 400 54px/78px "Noto Sans CJK SC", sans-serif; letter-spacing: -1.500px; -webkit-text-stroke: .6px #ed1c24; color: #ed1c24; white-space: nowrap; }

.bar { height: 30px; background: #d4d0c8; box-shadow: inset 0 1px #d4d0c8, inset 0 2px #fff; display: flex; align-items: center; padding: 0 3px 0 2px; flex: none; }
.start { width: 47px; height: 22px; box-shadow: inset -1px -1px #404040, inset 1px 1px #fff, inset -2px -2px #808080; display: flex; align-items: center; padding-left: 2px; gap: 2px; }
.ql { margin-left: 8px; }
.q2 { margin-left: 6px; }
.task { width: 160px; height: 22px; margin-left: 40px; padding-left: 5px; display: flex; align-items: center; gap: 3px; background: repeating-conic-gradient(#fff 0 25%, #d4d0c8 0 50%) 0 0 / 2px 2px; box-shadow: inset 1px 1px #404040, inset -1px -1px #fff, inset 2px 2px #808080; }
.task .tx { padding-top: 2px; }
.kb { margin-left: auto; }
.tsep { width: 2px; height: 24px; margin: 0 5px 0 4px; border-left: 1px solid #808080; border-right: 1px solid #fff; }
.tray { width: 81px; height: 22px; box-shadow: inset 1px 1px #808080, inset -1px -1px #fff; display: flex; align-items: center; padding-left: 2px; gap: 2px; }
.tray .tx { margin-left: 5px; padding-top: 1px; }
</style>
